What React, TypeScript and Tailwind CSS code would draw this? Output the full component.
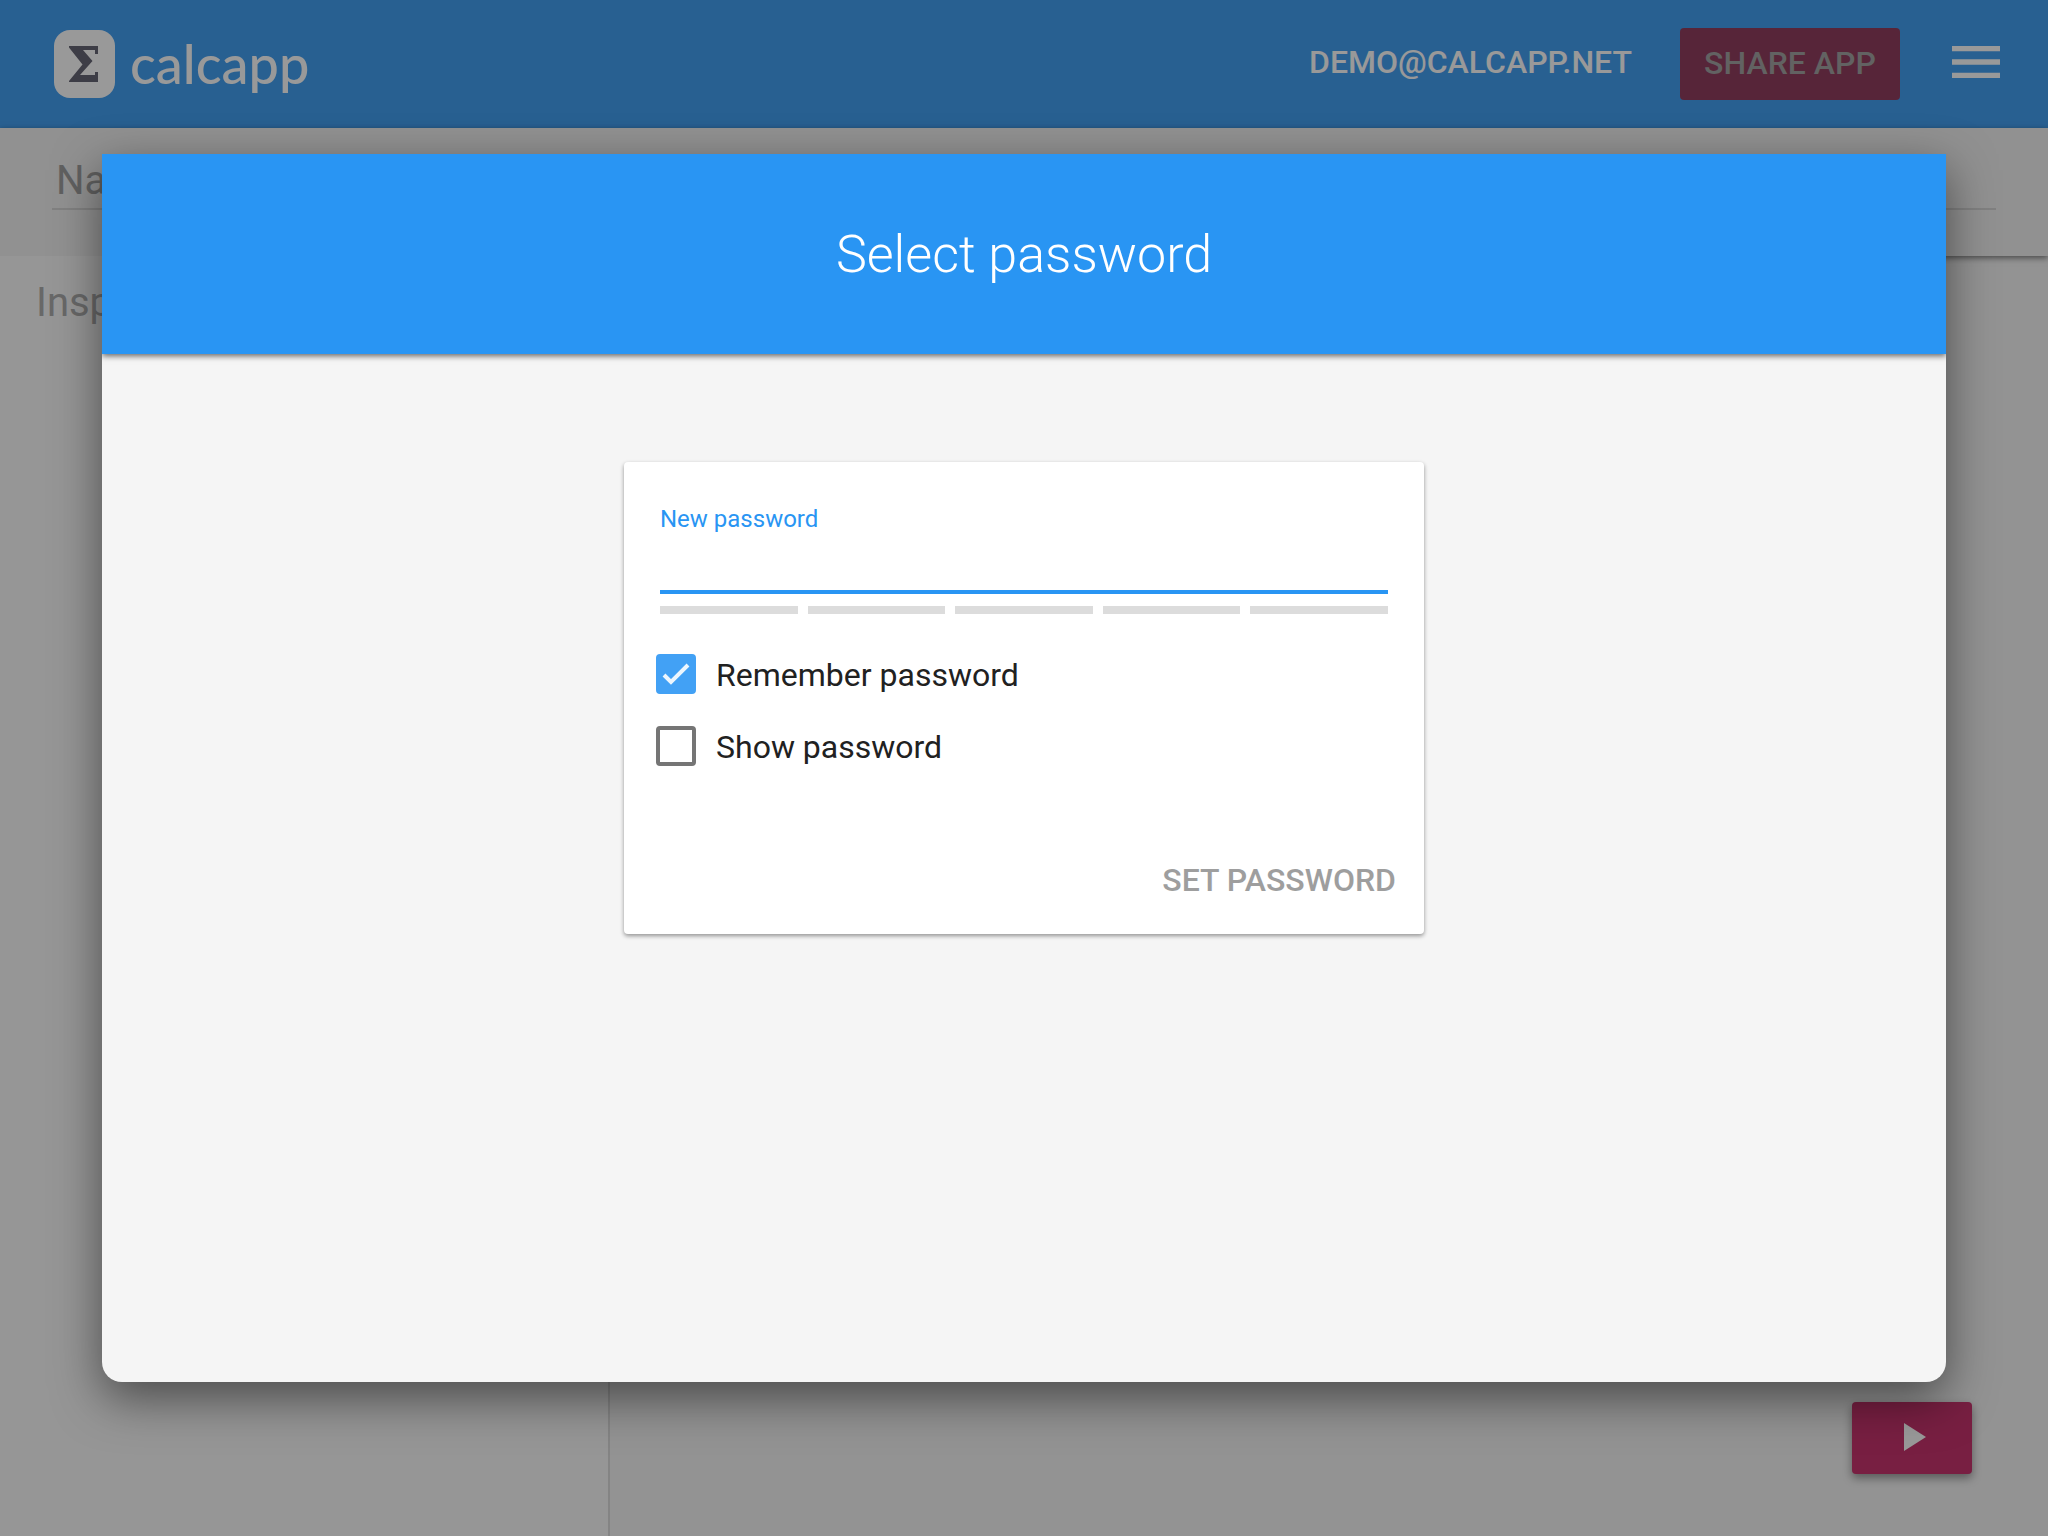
import { useState } from "react";
import type { ReactNode } from "react";

function Logo() {
  return (
    <a href="#" aria-label="calcapp" className="flex items-center gap-[15px] text-white">
      <svg viewBox="0 0 61 68" className="h-[68px] w-[61px]" aria-hidden="true">
        <rect width="61" height="68" rx="16" fill="#fff" />
        <path
          d="M15 16H44V24H41V20H29L38.500 31L26 45H41V42H44V52H15V51L28.500 34.500L15 17.500Z"
          fill="#676675"
        />
      </svg>
      <span className="font-['Lato',sans-serif] text-[54px] leading-[68px] font-medium">calcapp</span>
    </a>
  );
}

function Checkbox({ label, defaultChecked = false }: { label: string; defaultChecked?: boolean }) {
  return (
    <label className="flex h-10 items-center gap-5 text-[32px] leading-[42px] text-[#212121]">
      <span className="grid size-10">
        <input
          type="checkbox"
          defaultChecked={defaultChecked}
          className="peer col-start-1 row-start-1 size-10 appearance-none rounded border-4 border-[#757575] bg-white checked:border-[#42a1f5] checked:bg-[#42a1f5]"
        />
        <svg
          viewBox="0 0 40 40"
          className="pointer-events-none col-start-1 row-start-1 hidden size-10 peer-checked:block"
          aria-hidden="true"
        >
          <path d="M8 21L15 28L32 11" fill="none" stroke="#ecf6fe" strokeWidth="4" />
        </svg>
      </span>
      <span className="pt-[2px]">{label}</span>
    </label>
  );
}

function AppShell({ children }: { children: ReactNode }) {
  return (
    <div className="relative flex min-h-screen flex-col overflow-hidden bg-[#f5f5f5] font-['Roboto',sans-serif]">
      {children}
    </div>
  );
}

export default function App() {
  const [password, setPassword] = useState("");

  return (
    <AppShell>
      <header className="flex h-32 items-center justify-between bg-[#44a0f2] pr-10 pl-[54px]">
        <Logo />
        <div className="flex items-center text-[32px] font-medium text-white">
          <button type="button" className="mr-12 pb-1">DEMO@CALCAPP.NET</button>
          <button
            type="button"
            disabled
            className="mr-11 flex h-[72px] w-[220px] items-center justify-center rounded bg-[#923f5f] pb-[2px] text-[#a3a3a3]"
          >
            SHARE APP
          </button>
          <button type="button" aria-label="Menu" className="pb-1">
            <svg viewBox="0 0 24 24" className="size-16" fill="currentColor" aria-hidden="true">
              <path d="M3 18h18v-2H3v2zm0-5h18v-2H3v2zm0-7v2h18V6H3z" />
            </svg>
          </button>
        </div>
      </header>
      <div className="flex h-32 items-start bg-[#f2f2f2] px-[52px] pt-5 shadow-[0_2px_6px_rgba(0,0,0,0.5)]">
        <input
          aria-label="Name"
          placeholder="Name"
          className="h-[62px] w-full border-b-2 border-[#d8d8d8] bg-transparent px-1 pt-1 text-[40px] placeholder:text-[#a0a0a0]"
        />
      </div>
      <div className="relative flex flex-1">
        <aside className="w-[610px] border-r-2 border-[#dcdcdc] bg-[#fbfbfb] px-9 pt-6 text-[40px] leading-[46px] text-[#adadad]">
          Inspector
        </aside>
        <main className="flex-1" />
      </div>
      <button
        type="button"
        aria-label="Run app"
        className="absolute right-[76px] bottom-[62px] flex h-[72px] w-[120px] items-center justify-center rounded bg-[#c8346e] pb-[2px] text-white shadow-[0_4px_10px_rgba(0,0,0,0.4)]"
      >
        <svg viewBox="0 0 24 24" className="size-12" fill="currentColor" aria-hidden="true">
          <path d="M8 5v14l11-7z" />
        </svg>
      </button>

      <div className="absolute inset-0 flex items-center justify-center bg-black/40">
        <section
          role="dialog"
          aria-modal="true"
          aria-labelledby="dialog-title"
          className="flex h-4/5 w-9/10 flex-col overflow-hidden rounded-b-[20px] bg-[#f5f5f5] shadow-[0_16px_48px_rgba(0,0,0,0.5)]"
        >
          <div className="flex h-[200px] items-center justify-center bg-[#2995f3] pt-[2px] shadow-[0_2px_6px_rgba(0,0,0,0.6)]">
            <h1 id="dialog-title" className="text-[52px] font-light text-white">Select password</h1>
          </div>
          <form
            onSubmit={(e) => e.preventDefault()}
            className="mx-auto mt-[108px] flex w-[800px] flex-col rounded bg-white px-9 pt-10 pb-6 shadow-[0_2px_4px_rgba(0,0,0,0.4)]"
          >
            <label htmlFor="new-password" className="text-[24px] leading-[34px] text-[#2995f3]">
              New password
            </label>
            <input
              id="new-password"
              type="password"
              value={password}
              onChange={(e) => setPassword(e.target.value)}
              className="h-[58px] border-b-4 border-[#2995f3] text-[32px] outline-none"
            />
            <div className="mt-3 grid h-2 grid-cols-5 gap-[10px]">
              {[1, 2, 3, 4, 5].map((step) => (
                <span key={step} className="bg-[#dcdcdc]" />
              ))}
            </div>
            <div className="-ml-1 mt-10 flex flex-col gap-8">
              <Checkbox label="Remember password" defaultChecked />
              <Checkbox label="Show password" />
            </div>
            <button
              type="submit"
              disabled={password === ""}
              className="-mr-2 mt-[84px] h-[60px] self-end text-[32px] font-medium text-[#9e9e9e]"
            >
              SET PASSWORD
            </button>
          </form>
        </section>
      </div>
    </AppShell>
  );
}
